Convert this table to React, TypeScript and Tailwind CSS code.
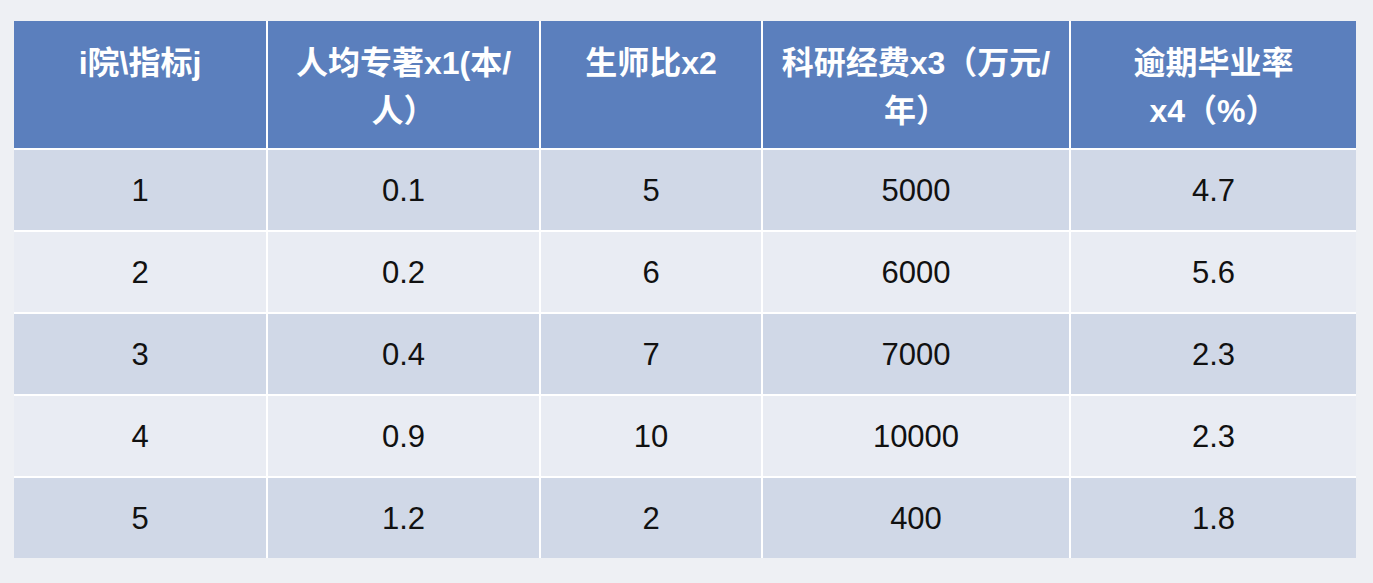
const headers: string[][] = [
  ["i院\\指标j"],
  ["人均专著x1(本/", "人）"],
  ["生师比x2"],
  ["科研经费x3（万元/", "年）"],
  ["逾期毕业率", "x4（%）"],
];

const rows = [
  ["1", "0.1", "5", "5000", "4.7"],
  ["2", "0.2", "6", "6000", "5.6"],
  ["3", "0.4", "7", "7000", "2.3"],
  ["4", "0.9", "10", "10000", "2.3"],
  ["5", "1.2", "2", "400", "1.8"],
];

export default function App() {
  return (
    <div className="min-h-screen w-full bg-[#eef0f4] pt-[21px] pl-[14px] font-['Liberation_Sans','Noto_Sans_CJK_SC',sans-serif]">
      <div className="grid w-[1342px] grid-cols-[252px_271px_220px_306px_285px] grid-rows-[127px_80px_80px_80px_80px_80px] gap-[2px] bg-white">
        {/* Header */}
        {headers.map((lines, i) => (
          <div
            key={i}
            className="bg-[#5b7fbd] pt-[18px] text-center text-[32px] font-bold leading-[48px] text-white"
          >
            {lines.map((line, j) => (
              <div key={j} className="whitespace-nowrap">
                {line}
              </div>
            ))}
          </div>
        ))}

        {/* Rows */}
        {rows.map((row, r) =>
          row.map((cell, c) => (
            <div
              key={`${r}-${c}`}
              className={`flex items-center justify-center pt-[2px] text-[31px] text-[#111] ${
                r % 2 === 0 ? "bg-[#d0d8e7]" : "bg-[#e9ecf3]"
              }`}
            >
              {cell}
            </div>
          ))
        )}
      </div>
    </div>
  );
}
